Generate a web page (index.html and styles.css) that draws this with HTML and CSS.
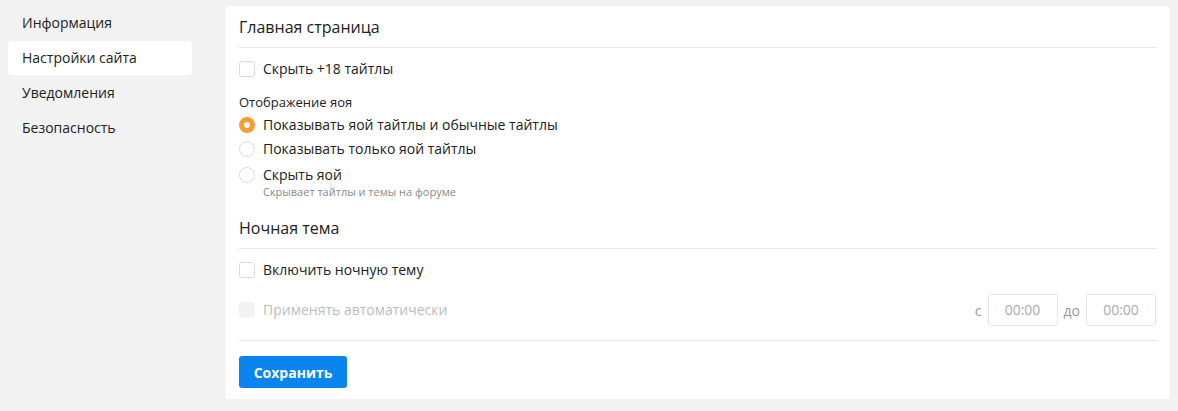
FILE: index.html
```html
<!DOCTYPE html>
<html lang="ru">
<head>
<meta charset="utf-8">
<link rel="stylesheet" href="styles.css">
</head>
<body>
<div class="page">
  <nav class="sidebar">
    <a class="nav-item">Информация</a>
    <a class="nav-item active">Настройки сайта</a>
    <a class="nav-item">Уведомления</a>
    <a class="nav-item">Безопасность</a>
  </nav>
  <main class="card">
    <h2 class="section-title">Главная страница</h2>
    <div class="section-body first">
      <label class="check"><span class="box"></span><span>Скрыть +18 тайтлы</span></label>
      <div class="group-label">Отображение яоя</div>
      <div class="radios">
        <label class="radio"><span class="circle checked"></span><span>Показывать яой тайтлы и обычные тайтлы</span></label>
        <label class="radio"><span class="circle"></span><span>Показывать только яой тайтлы</span></label>
        <label class="radio top"><span class="circle"></span><span class="radio-text"><span>Скрыть яой</span><span class="hint">Скрывает тайтлы и темы на форуме</span></span></label>
      </div>
    </div>
    <h2 class="section-title">Ночная тема</h2>
    <div class="section-body night">
      <label class="check"><span class="box"></span><span>Включить ночную тему</span></label>
      <div class="auto-row">
        <label class="check disabled"><span class="box"></span><span>Применять автоматически</span></label>
        <div class="times">
          <span class="tlabel">с</span>
          <span class="time">00:00</span>
          <span class="tlabel">до</span>
          <span class="time">00:00</span>
        </div>
      </div>
    </div>
    <div class="actions">
      <button class="btn">Сохранить</button>
    </div>
  </main>
</div>
</body>
</html>
```
FILE: styles.css
```css
* { box-sizing: border-box; }
html, body { margin: 0; padding: 0; }
body {
  background: #f2f2f2;
  font-family: "Open Sans", "Liberation Sans", sans-serif;
  font-size: 14px;
  color: #222;
}
.page {
  display: flex;
  align-items: flex-start;
  padding: 6px 8px 0 8px;
  gap: 33px;
}
.sidebar {
  width: 184px;
  display: flex;
  flex-direction: column;
  gap: 1px;
}
.nav-item {
  display: block;
  height: 34px;
  line-height: 34px;
  padding: 0 14px;
  border-radius: 4px;
  color: #222;
  font-size: 14px;
}
.nav-item.active { background: #fff; }
.card {
  flex: 1;
  background: #fff;
  border-radius: 4px;
  padding: 0 14px 11px;
}
.section-title {
  margin: 0;
  font-size: 16px;
  font-weight: 400;
  color: #222;
  height: 42px;
  line-height: 42px;
  border-bottom: 1px solid #e6e6e6;
}
.section-body { padding: 12px 0 15px; }
.section-body.first { padding-bottom: 7px; }
.check, .radio {
  display: flex;
  align-items: center;
  gap: 8px;
  height: 18px;
  line-height: 18px;
}
.box {
  width: 16px;
  height: 16px;
  border: 1px solid #dcdcdc;
  border-radius: 3px;
  flex: none;
}
.group-label {
  font-size: 13px;
  margin-top: 15px;
  line-height: 18px;
}
.radios {
  display: flex;
  flex-direction: column;
  gap: 6px;
  margin-top: 5px;
}
.circle {
  width: 16px;
  height: 16px;
  border: 1px solid #dcdcdc;
  border-radius: 50%;
  flex: none;
}
.circle.checked {
  border: 5px solid #ff9c2e;
  background: #fff;
}
.radio.top { align-items: flex-start; height: auto; margin-top: 2px; }
.radio.top .circle { margin-top: 1px; }
.radio-text { display: flex; flex-direction: column; }
.hint {
  font-size: 11px;
  color: #8a8a8a;
  line-height: 16px;
}
.night { padding-top: 12px; padding-bottom: 14px; border-bottom: 1px solid #e6e6e6; }
.auto-row {
  display: flex;
  align-items: center;
  justify-content: space-between;
  margin-top: 15px;
}
.check.disabled { color: #bdbdbd; }
.check.disabled .box { background: #f2f2f2; border-color: #f2f2f2; }
.times {
  display: flex;
  align-items: center;
}
.tlabel { color: #999; padding: 0 6px; font-size: 14px; }
.time {
  width: 70px;
  height: 32px;
  line-height: 30px;
  text-align: center;
  border: 1px solid #e6e6e6;
  border-radius: 3px;
  color: #aaa;
}
.actions { padding-top: 15px; }
.btn {
  height: 32px;
  width: 108px;
  background: #0a84ee;
  color: #fff;
  border: none;
  border-radius: 3px;
  font-family: "Open Sans", "Liberation Sans", sans-serif;
  font-size: 14px;
  font-weight: 700;
  padding: 0;
}
```
